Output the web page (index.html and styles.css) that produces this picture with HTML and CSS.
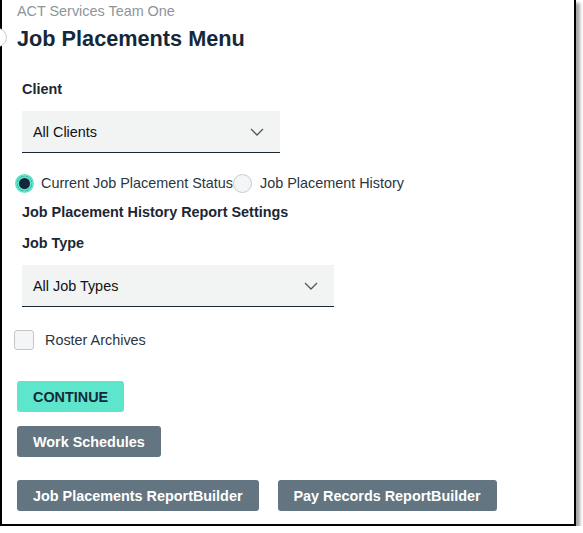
FILE: index.html
```html
<!DOCTYPE html>
<html>
<head>
<meta charset="utf-8">
<link rel="stylesheet" href="styles.css">
</head>
<body>
<div class="frame">
  <span class="ghost-radio"></span>
  <div class="team">ACT Services Team One</div>
  <h1 class="title">Job Placements Menu</h1>

  <div class="field first">
    <div class="label">Client</div>
    <div class="select client">
      <span>All Clients</span>
      <svg class="chev" width="14" height="8" viewBox="0 0 14 8"><path d="M1 1 L7 7 L13 1" fill="none" stroke="#555" stroke-width="1.3"/></svg>
    </div>
  </div>

  <div class="radios">
    <label class="radio"><span class="dot checked"></span>Current Job Placement Status</label>
    <label class="radio"><span class="dot"></span>Job Placement History</label>
  </div>

  <div class="section">Job Placement History Report Settings</div>

  <div class="field second">
    <div class="label">Job Type</div>
    <div class="select jobtype">
      <span>All Job Types</span>
      <svg class="chev" width="14" height="8" viewBox="0 0 14 8"><path d="M1 1 L7 7 L13 1" fill="none" stroke="#555" stroke-width="1.3"/></svg>
    </div>
  </div>

  <label class="check"><span class="box"></span>Roster Archives</label>

  <div class="actions">
    <button class="btn primary">CONTINUE</button>
    <button class="btn">Work Schedules</button>
    <div class="row">
      <button class="btn">Job Placements ReportBuilder</button>
      <button class="btn">Pay Records ReportBuilder</button>
    </div>
  </div>
</div>
</body>
</html>
```

FILE: styles.css
```css
* { box-sizing: border-box; }
body {
  margin: 0;
  background: #fff;
  font-family: "Liberation Sans", Arial, sans-serif;
  font-size: 14.4px;
  color: #1b2733;
}
.frame {
  position: relative;
  width: 576px;
  height: 526px;
  border: 2px solid #000;
  border-top: none;
  box-shadow: 4px 3px 3px rgba(0,0,0,0.35);
  padding: 3px 0 0 15px;
  background: #fff;
}
.ghost-radio {
  position: absolute;
  left: -14px;
  top: 28px;
  width: 19px;
  height: 19px;
  border-radius: 50%;
  border: 1px solid #c9cccf;
  background: #fff;
}
.team {
  color: #8c959c;
  font-size: 14.4px;
  line-height: 16px;
}
.title {
  margin: 7px 0 0 0;
  font-size: 21.7px;
  line-height: 26px;
  font-weight: bold;
  color: #15283a;
}
.field { padding-left: 5px; }
.label {
  font-weight: bold;
  line-height: 16px;
}
.field.first .label { margin-top: 29px; }
.field.second .label { margin-top: 15px; }
.select {
  margin-top: 14px;
  height: 42px;
  background: #f2f4f4;
  border-bottom: 1px solid #1b2733;
  display: flex;
  align-items: center;
  justify-content: space-between;
  padding: 0 16px 0 11px;
  color: #111;
}
.select span { margin-top: 1px; }
.client { width: 258px; }
.jobtype { width: 312px; }
.radios {
  display: flex;
  margin-top: 20px;
  margin-left: -2px;
  height: 20px;
  align-items: center;
  color: #2a3540;
}
.radio { display: flex; align-items: center; }
.dot {
  width: 19px;
  height: 19px;
  border-radius: 50%;
  border: 1px solid #c9cccf;
  background: #f4f5f6;
  margin-right: 7px;
  display: inline-block;
}
.radio + .radio .dot { margin-right: 8px; }
.dot.checked {
  border: 2px solid #5ee3cb;
  background: #15283a;
  box-shadow: inset 0 0 0 2px #5ee3cb;
}
.section {
  font-weight: bold;
  margin-top: 11px;
  padding-left: 5px;
  line-height: 16px;
}
.check {
  display: flex;
  align-items: center;
  margin-top: 23px;
  margin-left: -3px;
  color: #2a3540;
}
.box {
  width: 20px;
  height: 20px;
  border: 1px solid #c3c7ca;
  border-radius: 3px;
  background: #f4f5f6;
  margin-right: 11px;
}
.actions {
  margin-top: 31px;
  display: flex;
  flex-direction: column;
  align-items: flex-start;
  gap: 14px;
}
.btn {
  font-family: "Liberation Sans", Arial, sans-serif;
  font-size: 14.4px;
  font-weight: bold;
  height: 31px;
  border: none;
  border-radius: 3px;
  background: #627580;
  color: #fff;
  padding: 0 16px;
  cursor: pointer;
}
.btn.primary {
  background: #5ee6cd;
  color: #15283a;
  padding: 0 16px;
}
.row {
  display: flex;
  gap: 19px;
  margin-top: 9px;
}
```
